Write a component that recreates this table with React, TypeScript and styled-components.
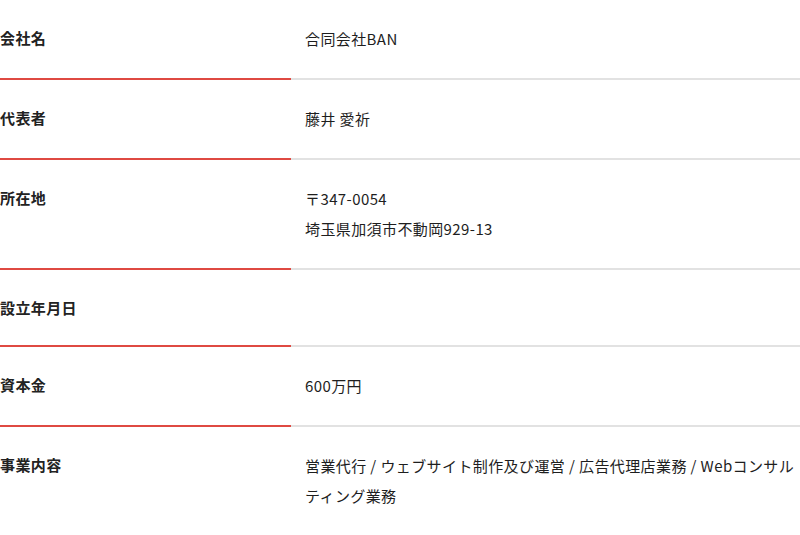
import React from "react";
import styled, { createGlobalStyle } from "styled-components";

const Global = createGlobalStyle`
  html, body { margin: 0; padding: 0; background: #fff; }
  body {
    font-family: "Noto Sans CJK JP", "Noto Sans", sans-serif;
    color: #222;
    overflow: hidden;
  }
`;

const Table = styled.dl`
  margin: 0;
  width: 800px;
  display: grid;
  grid-template-columns: 291px 1fr;
  letter-spacing: 0.4px;
`;

const Label = styled.dt`
  margin: 0;
  padding: 24px 0;
  font-size: 15px;
  font-weight: 700;
  line-height: 27px;
  color: #222;
  border-bottom: 2px solid #df4a42;
`;

const Value = styled.dd`
  margin: 0;
  padding: 24px 0 24px 14px;
  font-size: 15px;
  font-weight: 400;
  line-height: 30px;
  color: #1e1e1e;
  border-bottom: 2px solid #e2e2e2;
`;

const rows: { label: string; value: string[] }[] = [
  { label: "会社名", value: ["合同会社BAN"] },
  { label: "代表者", value: ["藤井 愛祈"] },
  { label: "所在地", value: ["〒347-0054", "埼玉県加須市不動岡929-13"] },
  { label: "設立年月日", value: [] },
  { label: "資本金", value: ["600万円"] },
  {
    label: "事業内容",
    value: ["営業代行 / ウェブサイト制作及び運営 / 広告代理店業務 / Webコンサルティング業務"],
  },
];

export default function App() {
  return (
    <>
      <Global />
      <Table>
        {rows.map((r) => (
          <React.Fragment key={r.label}>
            <Label>{r.label}</Label>
            <Value>
              {r.value.map((line, i) => (
                <React.Fragment key={i}>
                  {i > 0 && <br />}
                  {line}
                </React.Fragment>
              ))}
            </Value>
          </React.Fragment>
        ))}
      </Table>
    </>
  );
}
